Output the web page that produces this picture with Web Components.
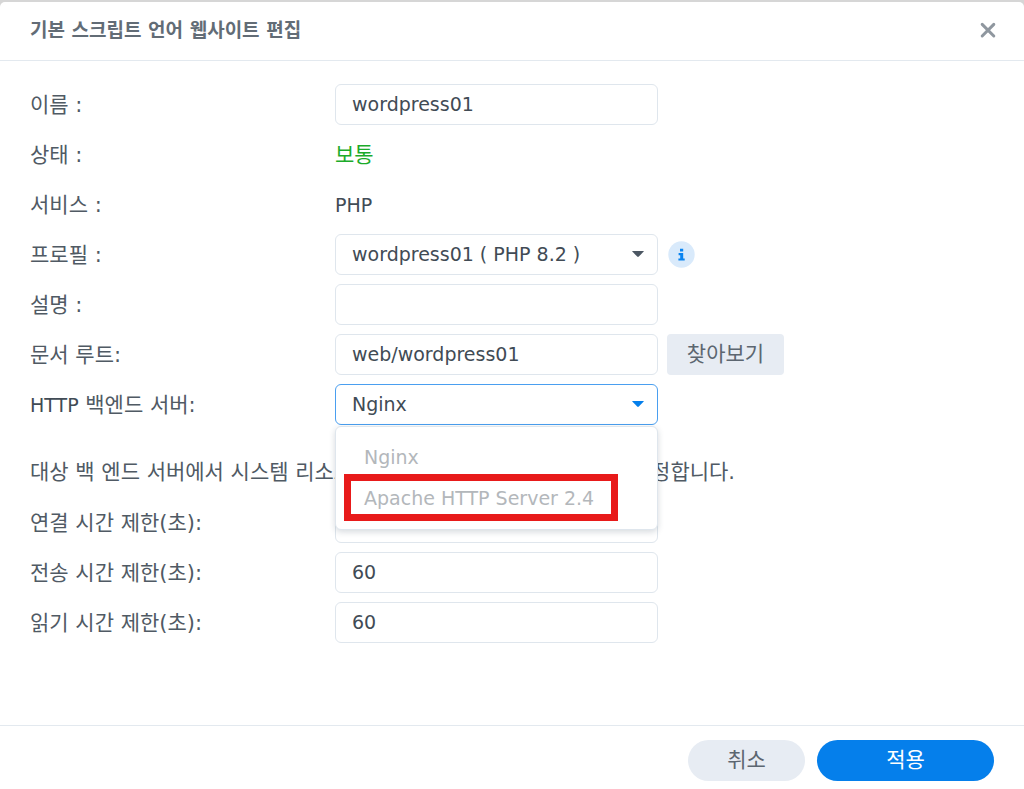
<!DOCTYPE html>
<html lang="ko">
<head>
<meta charset="utf-8">
<meta name="viewport" content="width=device-width, initial-scale=1">
<title>기본 스크립트 언어 웹사이트 편집</title>
<style>
  :root {
    --ink: #414b55;
    --label: #505a64;
    --line: #dfe6ed;
    --accent: #057feb;
    --soft: #e7ecf3;
    --latin: 19px;
    --hangul: 21px;
  }
  body {
    margin: 0;
    background: #d6d6d6;
    color: var(--label);
    font-family: "DejaVu Sans", "Noto Sans CJK KR", sans-serif;
    font-size: var(--hangul);
    line-height: 28px;
  }
  .latin { font-size: var(--latin); color: var(--ink); }
  .ok { color: #1cab2a; }
</style>
</head>
<body>
<edit-dialog heading="기본 스크립트 언어 웹사이트 편집">
  <form-row type="text" value="wordpress01"><span slot="label">이름 :</span></form-row>
  <form-row><span slot="label">상태 :</span><span class="ok">보통</span></form-row>
  <form-row><span slot="label">서비스 :</span><span class="latin">PHP</span></form-row>
  <form-row type="select" value="wordpress01 ( PHP 8.2 )"><span slot="label">프로필 :</span><info-badge slot="extra"></info-badge></form-row>
  <form-row type="text"><span slot="label">설명 :</span></form-row>
  <form-row type="text" value="web/wordpress01"><span slot="label">문서 루트:</span><soft-button slot="extra">찾아보기</soft-button></form-row>
  <form-row type="select" value="Nginx" open><span slot="label"><span class="latin">HTTP</span> 백엔드 서버:</span><option-menu options="Nginx|Apache HTTP Server 2.4" marked="Apache HTTP Server 2.4"></option-menu></form-row>
  <form-note>대상 백 엔드 서버에서 시스템 리소스를 더 쓸 수 있도록 시간 제한을 설정합니다.</form-note>
  <form-row type="text" value="60"><span slot="label">연결 시간 제한(초):</span></form-row>
  <form-row type="text" value="60"><span slot="label">전송 시간 제한(초):</span></form-row>
  <form-row type="text" value="60"><span slot="label">읽기 시간 제한(초):</span></form-row>
  <soft-button slot="actions" kind="pill">취소</soft-button>
  <soft-button slot="actions" kind="primary">적용</soft-button>
</edit-dialog>

<template id="dialog-tpl">
  <style>
    :host { display: block; padding-top: 2px; }
    section {
      box-sizing: border-box;
      min-height: calc(100vh - 2px);
      display: flex;
      flex-direction: column;
      background: #fff;
      border-radius: 5px 5px 0 0;
    }
    header {
      display: flex;
      align-items: center;
      justify-content: space-between;
      padding: 14px 26px 16px 30px;
      border-bottom: 1px solid #e3e9ef;
    }
    h1 { margin: 0; font-size: 19px; line-height: 28px; font-weight: 700; color: #626c76; }
    .close { border: 0; background: none; padding: 0; width: 20px; height: 20px; display: block; color: #8f979f; }
    svg { display: block; }
    main { flex: 1; display: flex; flex-direction: column; gap: 9px; padding: 23px 30px; }
    footer {
      display: flex;
      justify-content: flex-end;
      gap: 12px;
      padding: 14px 30px 8px;
      border-top: 1px solid #e3e9ef;
    }
  </style>
  <section role="dialog" aria-labelledby="t">
    <header>
      <h1 id="t"></h1>
      <button class="close" type="button" aria-label="닫기">
        <svg width="20" height="20" viewBox="0 0 20 20" fill="none" stroke="currentColor" stroke-width="3" stroke-linecap="round"><path d="M4.2 4.4 15.8 16M15.8 4.4 4.2 16"/></svg>
      </button>
    </header>
    <main><slot></slot></main>
    <footer><slot name="actions"></slot></footer>
  </section>
</template>

<template id="row-tpl">
  <style>
    :host { display: grid; grid-template-columns: 305px minmax(0, 323px) auto; justify-content: start; align-items: center; min-height: 41px; }
    .control { position: relative; }
    .extra { padding-left: 9px; }
    input, select {
      display: block;
      box-sizing: border-box;
      width: 100%;
      height: 41px;
      margin: 0;
      padding: 0 16px 1px;
      border: 1px solid var(--line);
      border-radius: 6px;
      background: #fff;
      color: var(--ink);
      font: inherit;
      font-size: var(--latin);
      outline: none;
      appearance: none;
    }
    :host([open]) select { border-color: #4a9ff0; }
    .arrow { position: absolute; right: 14px; top: 17px; pointer-events: none; color: #4c5763; }
    :host([open]) .arrow { color: var(--accent); }
  </style>
  <label for="c"><slot name="label"></slot></label>
  <div class="control"><slot></slot></div>
  <div class="extra"><slot name="extra"></slot></div>
</template>

<template id="menu-tpl">
  <style>
    :host { position: absolute; z-index: 2; top: 42px; left: 0; right: 0; display: block; }
    ul {
      margin: 0;
      padding: 10px 0;
      list-style: none;
      background: #fff;
      border: 1px solid var(--line);
      border-radius: 6px;
      box-shadow: 0 2px 6px rgba(30, 50, 70, .18);
      color: #b3b7bb;
      font-size: var(--latin);
    }
    li { position: relative; padding: 0 28px; line-height: 41px; }
    li.marked::after {
      content: "";
      position: absolute;
      box-sizing: border-box;
      left: 8px;
      top: -4px;
      bottom: -2px;
      width: 274px;
      border: 7px solid #e81a1a;
    }
  </style>
  <ul role="listbox"></ul>
</template>

<template id="button-tpl">
  <style>
    :host { display: block; }
    button {
      display: block;
      height: 41px;
      min-width: 117px;
      padding: 0 16px 2px;
      border: 0;
      border-radius: 4px;
      background: var(--soft);
      color: #5c6670;
      font: inherit;
      line-height: 28px;
    }
    :host([kind="pill"]) button, :host([kind="primary"]) button { border-radius: 21px; }
    :host([kind="primary"]) button { min-width: 177px; background: var(--accent); color: #fff; }
  </style>
  <button type="button"><slot></slot></button>
</template>

<template id="info-tpl">
  <style>
    :host { display: block; margin-left: 1px; }
    svg { display: block; }
  </style>
  <svg width="27" height="27" viewBox="0 0 27 27" role="img" aria-label="정보">
    <circle cx="13.5" cy="13.5" r="13.2" fill="#d9eafb"/>
    <path fill="#0a84f0" d="M12 7.7h3.2v2.8H12zM10.6 12.1h4.6v5.3h1.5v2.1h-6.3v-2.1h1.8v-3.2h-1.6z"/>
  </svg>
</template>

<script>
  const stamp = (host, id) => {
    const root = host.attachShadow({ mode: "open" });
    root.append(document.getElementById(id).content.cloneNode(true));
    return root;
  };

  class EditDialog extends HTMLElement {
    constructor() {
      super();
      stamp(this, "dialog-tpl").querySelector("h1").textContent = this.getAttribute("heading");
    }
  }

  class FormRow extends HTMLElement {
    connectedCallback() {
      if (this.shadowRoot) return;
      const root = stamp(this, "row-tpl");
      const box = root.querySelector(".control");
      const type = this.getAttribute("type");
      if (type === "text") {
        const input = document.createElement("input");
        input.id = "c";
        input.type = "text";
        input.value = this.getAttribute("value") || "";
        box.prepend(input);
      } else if (type === "select") {
        const select = document.createElement("select");
        select.id = "c";
        select.add(new Option(this.getAttribute("value")));
        box.prepend(select);
        select.insertAdjacentHTML("afterend",
          '<svg class="arrow" width="12" height="6" viewBox="0 0 12 6"><path fill="currentColor" d="M.6 0h10.8q.8 0 .3.6L6.8 5.6q-.8.7-1.6 0L.3.6Q-.2 0 .6 0z"/></svg>');
      }
    }
  }

  class OptionMenu extends HTMLElement {
    connectedCallback() {
      if (this.shadowRoot) return;
      const list = stamp(this, "menu-tpl").querySelector("ul");
      const marked = this.getAttribute("marked");
      for (const name of this.getAttribute("options").split("|")) {
        const item = document.createElement("li");
        item.setAttribute("role", "option");
        item.textContent = name;
        item.classList.toggle("marked", name === marked);
        list.append(item);
      }
    }
  }

  class SoftButton extends HTMLElement {
    constructor() { super(); stamp(this, "button-tpl"); }
  }

  class InfoBadge extends HTMLElement {
    constructor() { super(); stamp(this, "info-tpl"); }
  }

  class FormNote extends HTMLElement {
    constructor() {
      super();
      this.attachShadow({ mode: "open" }).innerHTML =
        "<style>:host { display: block; margin-top: 18px; line-height: 41px; white-space: nowrap; }</style><slot></slot>";
    }
  }

  customElements.define("edit-dialog", EditDialog);
  customElements.define("form-row", FormRow);
  customElements.define("option-menu", OptionMenu);
  customElements.define("soft-button", SoftButton);
  customElements.define("info-badge", InfoBadge);
  customElements.define("form-note", FormNote);
</script>
</body>
</html>
